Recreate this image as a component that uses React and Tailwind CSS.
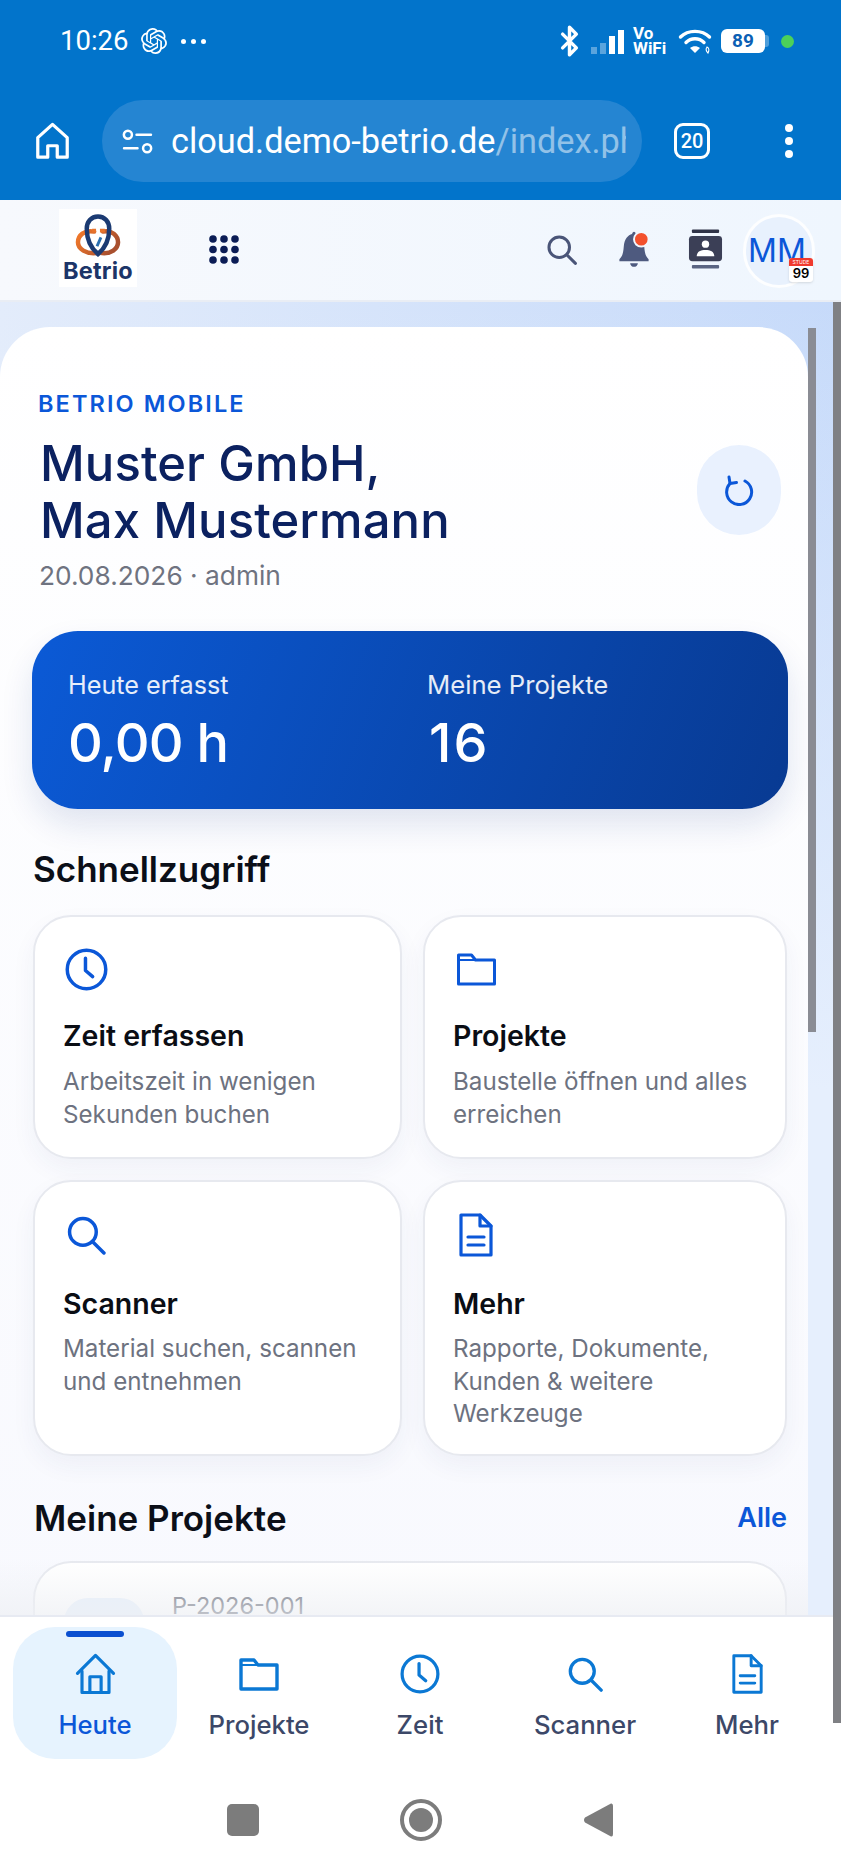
import React from "react";
import { SiOpenai } from "react-icons/si";
import { Bluetooth } from "lucide-react";

const HomeOutline = ({ className, sw = 2 }) => (
  <svg viewBox="0 0 36 40" fill="none" stroke="currentColor" strokeWidth={sw} strokeLinejoin="round" strokeLinecap="round" className={className}>
    <path d="M2 19 L18 3 L34 19" />
    <path d="M6 17 V36 H30 V17" />
    <path d="M13 36 V22 H23 V36" />
  </svg>
);
const BrowserHome = ({ className }) => (
  <svg viewBox="0 0 36 40" fill="none" stroke="currentColor" strokeWidth="3.4" strokeLinejoin="round" className={className}>
    <path d="M2.5 16.5 L18 2.5 L33.5 16.5 V37 H23 V25 H13 V37 H2.5 Z" />
  </svg>
);
const FolderIcon = ({ className, sw = 3 }) => (
  <svg viewBox="0 0 40 34" fill="none" stroke="currentColor" strokeWidth={sw} strokeLinejoin="round" className={className}>
    <path d="M2 3 H15 L19 8 H38 V32 H2 Z" />
    <path d="M2 8 H19" strokeWidth="2" />
  </svg>
);
const ClockIcon = ({ className }) => (
  <svg viewBox="0 0 42 42" fill="none" stroke="currentColor" strokeWidth="3.4" strokeLinecap="round" strokeLinejoin="round" className={className}>
    <circle cx="21" cy="21" r="18.8" />
    <path d="M20 10 V22 L27 28" />
  </svg>
);
const SearchIcon = ({ className, sw = 3.4 }) => (
  <svg viewBox="0 0 38 38" fill="none" stroke="currentColor" strokeWidth={sw} strokeLinecap="round" className={className}>
    <circle cx="15.5" cy="15.5" r="13" />
    <path d="M25 25 L36 36" />
  </svg>
);
const DocIcon = ({ className }) => (
  <svg viewBox="0 0 34 44" fill="none" stroke="currentColor" strokeWidth="3.2" strokeLinejoin="round" strokeLinecap="round" className={className}>
    <path d="M2 2 H21 L32 13 V42 H2 Z" />
    <path d="M21 2 V13 H32" />
    <path d="M9 24 H25 M9 32 H25" />
  </svg>
);
const RefreshIcon = ({ className }) => (
  <svg viewBox="0 0 30 32" fill="none" stroke="currentColor" strokeWidth="3" strokeLinecap="round" strokeLinejoin="round" className={className}>
    <path d="M21 7 A12.5 12.5 0 1 1 6 9.5" />
    <path d="M5 3 L6 9.5 L12.5 8.5" />
  </svg>
);
const TuneIcon = ({ className }) => (
  <svg viewBox="0 0 32 26" fill="none" stroke="currentColor" strokeWidth="2.6" strokeLinecap="round" className={className}>
    <circle cx="6" cy="6" r="4.2" />
    <path d="M15 6 H30 M2 20 H16" />
    <circle cx="26" cy="20" r="4.2" />
  </svg>
);
const WifiIcon = ({ className }) => (
  <svg viewBox="0 0 34 26" fill="none" stroke="currentColor" strokeLinecap="round" className={className}>
    <path d="M2.5 9 C10 1.5 24 1.5 31.5 9" strokeWidth="3.4" />
    <path d="M8 14.5 C13 9.5 21 9.5 26 14.5" strokeWidth="3.4" />
    <path d="M12 20 L17 25 L22 20 C19 17.5 15 17.5 12 20 Z" fill="currentColor" stroke="none" />
    <path d="M29 19 C31 20 31.5 22 30 25 C28 23 27.5 21 29 19 Z" strokeWidth="1.1" />
  </svg>
);
const BellIcon = ({ className }) => (
  <svg viewBox="0 0 32 38" className={className}>
    <path d="M1 29 C4 26 5 23 5.5 16 C6 8 10 4 14 3 C15 0 17 0 18 3 C22 4 26 8 26.5 16 C27 23 28 26 31 29 V31 H1 Z" fill="#4e5a7f" />
    <path d="M12 33 H20 C19.5 38 12.5 38 12 33 Z" fill="#4e5a7f" />
    <circle cx="23.5" cy="8.5" r="7.5" fill="#f3512d" stroke="#f2f7fe" strokeWidth="2" />
  </svg>
);
const ContactIcon = ({ className }) => (
  <svg viewBox="0 0 36 42" className={className}>
    <rect x="4" y="0.5" width="28" height="3.5" rx="1" fill="#2f3347" />
    <rect x="1" y="7" width="34" height="26" rx="3.5" fill="#3b3f56" />
    <circle cx="18" cy="15.5" r="3.8" fill="#fff" />
    <path d="M9 28 C9 23 13 21.5 18 21.5 C23 21.5 27 23 27 28 Z" fill="#fff" />
    <rect x="4" y="37" width="28" height="3.5" rx="1" fill="#5a6482" />
  </svg>
);
const AppsIcon = ({ className }) => (
  <svg viewBox="0 0 30 29" fill="#0b1c55" className={className}>
    {[4, 15, 26].map((x) => [4, 14.5, 25].map((y) => <circle key={x + "-" + y} cx={x} cy={y} r="3.8" />))}
  </svg>
);
const LogoMark = ({ className }) => (
  <svg viewBox="0 0 46 44" fill="none" className={className}>
    <defs>
      <linearGradient id="orangeRing" x1="0" y1="0" x2="1" y2="0.4">
        <stop offset="0" stopColor="#f47a2a" />
        <stop offset="1" stopColor="#a9502f" />
      </linearGradient>
    </defs>
    <path d="M19 18 C9 16 2.5 22 2.5 29 C2.5 36 11 41 21 40 M28 18 C37 16 43.5 22 43.5 29 C43.5 36 36 41 27 40" stroke="url(#orangeRing)" strokeWidth="4.6" strokeLinecap="round" />
    <path d="M23 2.5 C30 2.5 34.5 8 34.5 15 C34.5 26 30 35 23 41 C16 35 11.5 26 11.5 15 C11.5 8 16 2.5 23 2.5 Z" stroke="#1b3a72" strokeWidth="4.6" />
    <path d="M17 17 H21 M25 17 H30" stroke="#e8742c" strokeWidth="4" />
    <path d="M26 24 L22 33" stroke="#2a6fb0" strokeWidth="3" />
  </svg>
);

function ActionCard({ icon, title, lines, tall }) {
  return (
    <div className={`flex flex-col rounded-[38px] border-2 border-[#e7e9ef] bg-white pl-[28px] shadow-[0_10px_24px_rgba(30,50,110,0.05)] ${tall ? "h-[276px] pt-[31px]" : "h-[244px] pt-[30px]"}`}>
      <div className="flex h-[44px] items-center text-[#0b57d8]">{icon}</div>
      <div className={`text-[28.5px] leading-[36px] font-semibold text-[#0a0d14] ${tall ? "mt-[29px]" : "mt-[27px]"}`}>{title}</div>
      <div className={`text-[24.2px] leading-[32.5px] text-[#6d7280] ${tall ? "mt-[11px]" : "mt-[12px]"}`}>
        {lines.map((l) => (
          <div key={l} className="whitespace-nowrap">{l}</div>
        ))}
      </div>
    </div>
  );
}

function NavItem({ icon, label, active }) {
  return (
    <div className={`relative flex h-[132px] flex-col items-center rounded-[42px] pt-[24px] ${active ? "bg-[#e6f3fe]" : ""}`}>
      {active && <div className="absolute top-[4px] h-[6px] w-[58px] rounded-full bg-[#0b4fd0]" />}
      <div className="flex h-[46px] items-center text-[#0b78d4]">{icon}</div>
      <div className={`mt-[11px] text-[25.7px] leading-[34px] font-medium whitespace-nowrap ${active ? "text-[#0b57d8]" : "text-[#3c4868]"}`}>{label}</div>
    </div>
  );
}

export default function App() {
  return (
    <div className="relative flex h-[1870px] w-[841px] flex-col overflow-hidden bg-white font-['Inter',sans-serif]">
      {/* Browser chrome */}
      <div className="h-[200px] shrink-0 bg-[#0274cb] font-['Roboto',sans-serif] text-white">
        <div className="flex h-[82px] items-center justify-between pr-[47px] pl-[60px]">
          <div className="flex items-center">
            <span className="text-[27.5px] leading-none">10:26</span>
            <SiOpenai className="ml-[13px] h-[26px] w-[26px]" />
            <div className="ml-[14px] flex gap-[5px]">
              <span className="h-[5px] w-[5px] rounded-full bg-white" />
              <span className="h-[5px] w-[5px] rounded-full bg-white" />
              <span className="h-[5px] w-[5px] rounded-full bg-white" />
            </div>
          </div>
          <div className="flex items-center">
            <Bluetooth className="h-[36px] w-[33px]" strokeWidth={2.5} />
            <div className="ml-[5px] flex h-[26px] items-end gap-[3px]">
              <span className="h-[7px] w-[6px] bg-white/35" />
              <span className="h-[11px] w-[6px] bg-white/35" />
              <span className="h-[18px] w-[6px] bg-white" />
              <span className="h-[24px] w-[6px] bg-white" />
            </div>
            <div className="ml-[9px] w-[38px] text-[17px] leading-[15px] font-bold">
              <div>Vo</div>
              <div>WiFi</div>
            </div>
            <WifiIcon className="ml-[7px] h-[26px] w-[34px]" />
            <div className="ml-[9px] flex h-[24px] w-[44px] items-center justify-center rounded-[6px] bg-white text-[19px] font-bold text-[#0b5fb4]">89</div>
            <div className="h-[12px] w-[4px] rounded-r-[3px] bg-white/30" />
            <div className="ml-[12px] h-[13px] w-[13px] rounded-full bg-[#4cd05a]" />
          </div>
        </div>
        <div className="mt-[18px] flex h-[82px] items-center">
          <BrowserHome className="ml-[35px] h-[38px] w-[35px]" />
          <div className="ml-[32px] flex h-[82px] w-[540px] items-center overflow-hidden rounded-full bg-[#2585d2] pl-[20px]">
            <TuneIcon className="h-[25px] w-[31px] shrink-0" />
            <span className="ml-[18px] w-[455px] overflow-hidden text-[34.3px] leading-none whitespace-nowrap">
              cloud.demo-betrio.de<span className="text-white/50">/index.php</span>
            </span>
          </div>
          <div className="ml-[32px] flex h-[36px] w-[36px] items-center justify-center rounded-[9px] border-[3px] border-white text-[20px] font-medium">20</div>
          <div className="ml-[75px] flex flex-col gap-[5px]">
            <span className="h-[8px] w-[8px] rounded-full bg-white" />
            <span className="h-[8px] w-[8px] rounded-full bg-white" />
            <span className="h-[8px] w-[8px] rounded-full bg-white" />
          </div>
        </div>
      </div>

      {/* App header */}
      <header className="flex h-[102px] shrink-0 items-center border-b-2 border-[#e9edf4] bg-gradient-to-r from-[#f7f9fd] to-[#eff6fe] pb-[1px]">
        <div className="mb-[3px] ml-[59px] flex h-[78px] w-[78px] flex-col items-center bg-white pt-[5px]">
          <LogoMark className="h-[43px] w-[46px]" />
          <span className="mt-[1px] text-[23.5px] leading-[26px] font-bold tracking-[0.2px] text-[#1c3568]">Betrio</span>
        </div>
        <AppsIcon className="ml-[72px] h-[29px] w-[30px]" />
        <div className="flex-1" />
        <SearchIcon className="h-[30px] w-[30px] text-[#4a5578]" sw={3.8} />
        <BellIcon className="ml-[41px] h-[37px] w-[32px]" />
        <ContactIcon className="ml-[38px] h-[41px] w-[35px]" />
        <div className="relative mt-[2px] mr-[26px] ml-[20px] flex h-[74px] w-[72px] items-center justify-center rounded-full border-[3px] border-white/90 bg-[#e8f1fd] pr-[4px] text-[32px] text-[#0b57d8]">
          MM
          <div className="absolute top-[41px] left-[43px] flex h-[24px] w-[24px] flex-col overflow-hidden rounded-[3px] bg-white text-center shadow-sm">
            <div className="h-[8px] bg-[#f03a2e] text-[5px] leading-[8px] text-white">STUDE</div>
            <div className="text-[13px] leading-[15px] font-semibold text-black">99</div>
          </div>
        </div>
      </header>

      {/* Page */}
      <main className="flex min-h-0 flex-1 overflow-hidden bg-[linear-gradient(to_bottom,transparent,#e6effd_60%),linear-gradient(to_right,#e3ecfb,#c6dafa)] pr-[25px]">
        <div className="mt-[25px] w-[808px] shrink-0 rounded-t-[50px] bg-gradient-to-b from-white to-[#f8f9fe] px-[33px] pt-[60px]">
          <div className="pl-[5px] text-[23.5px] leading-[34px] font-semibold tracking-[2.1px] text-[#0b57d8]">BETRIO MOBILE</div>
          <div className="relative mt-[14px] pl-[7px]">
            <h1 className="text-[49px] leading-[57px] font-medium tracking-[0.1px] text-[#0b2160]">
              Muster GmbH,<br />Max Mustermann
            </h1>
            <div className="absolute top-[10px] right-[-6px] flex h-[90px] w-[84px] items-center justify-center rounded-full bg-[#e9f1fe]">
              <RefreshIcon className="h-[32px] w-[30px] text-[#0b57d8]" />
            </div>
          </div>
          <div className="mt-[10px] pl-[6px] text-[26.3px] leading-[34px] text-[#6f7380]">20.08.2026 · admin</div>

          <div className="mt-[38px] -ml-px grid h-[178px] w-[756px] grid-cols-[359px_1fr] rounded-[46px] bg-[linear-gradient(110deg,#0b5ad6,#083a92)] pt-[37px] pl-[36px] text-white shadow-[0_16px_32px_rgba(20,50,130,0.12)]">
            <div>
              <div className="text-[25.2px] leading-[34px] text-white/90">Heute erfasst</div>
              <div className="mt-[8px] text-[54px] leading-[66px] font-medium tracking-[-0.8px]">0,00 h</div>
            </div>
            <div>
              <div className="text-[25.7px] leading-[34px] text-white/90">Meine Projekte</div>
              <div className="mt-[8px] pl-[2px] text-[54px] leading-[66px] font-medium tracking-[2px]">16</div>
            </div>
          </div>

          <h2 className="mt-[38px] text-[35px] leading-[44px] font-semibold text-[#0b0f18]">Schnellzugriff</h2>
          <div className="mt-[24px] grid w-[754px] grid-cols-[369px_364px] gap-x-[21px] gap-y-[21px]">
            <ActionCard icon={<ClockIcon className="ml-[2px] h-[43px] w-[43px]" />} title="Zeit erfassen" lines={["Arbeitszeit in wenigen", "Sekunden buchen"]} />
            <ActionCard icon={<FolderIcon className="ml-[1px] h-[34px] w-[45px]" />} title="Projekte" lines={["Baustelle öffnen und alles", "erreichen"]} />
            <ActionCard tall icon={<SearchIcon className="ml-[4px] h-[39px] w-[39px]" sw={3.4} />} title="Scanner" lines={["Material suchen, scannen", "und entnehmen"]} />
            <ActionCard tall icon={<DocIcon className="ml-[6px] h-[44px] w-[34px]" />} title="Mehr" lines={["Rapporte, Dokumente,", "Kunden & weitere", "Werkzeuge"]} />
          </div>

          <div className="mt-[41px] flex w-[754px] items-center justify-between pl-[1px]">
            <h2 className="text-[35px] leading-[42px] font-semibold text-[#0b0f18]">Meine Projekte</h2>
            <span className="text-[27px] leading-[36px] font-semibold text-[#0b57d8]">Alle</span>
          </div>
          <div className="mt-[22px] flex h-[120px] w-[754px] rounded-t-[38px] border-2 border-b-0 border-[#e7e9ef] bg-white pt-[35px] pl-[29px]">
            <div className="h-[80px] w-[80px] rounded-[24px] bg-[#e6f0fc]" />
            <div className="mt-[-7px] ml-[28px] text-[23.5px] leading-[30px] text-[#565b69]">P-2026-001</div>
          </div>
        </div>
        <div className="mt-[26px] h-[704px] w-[8px] shrink-0 bg-[#8a8c94]" />
      </main>

      {/* Fade above the bottom bar */}
      <div className="pointer-events-none absolute top-[1560px] left-0 h-[55px] w-[808px] bg-gradient-to-b from-transparent to-[#eef0f4]/70" />

      {/* Bottom nav */}
      <nav className="relative h-[255px] shrink-0 border-t-2 border-[#e7eaf2] bg-white">
        <div className="mt-[10px] ml-[13px] grid grid-cols-[164px_164px_158px_172px_152px]">
          <NavItem active label="Heute" icon={<HomeOutline className="h-[45px] w-[41px]" sw={2.8} />} />
          <NavItem label="Projekte" icon={<FolderIcon className="h-[34px] w-[40px]" sw={3.4} />} />
          <NavItem label="Zeit" icon={<ClockIcon className="h-[40px] w-[40px]" />} />
          <NavItem label="Scanner" icon={<SearchIcon className="h-[35px] w-[35px]" sw={3.6} />} />
          <NavItem label="Mehr" icon={<DocIcon className="h-[42px] w-[31px]" />} />
        </div>
        <div className="mt-[43px] flex h-[36px] items-center">
          <div className="ml-[227px] h-[32px] w-[32px] rounded-[5px] bg-[#7c7c7c]" />
          <div className="ml-[141px] flex h-[42px] w-[42px] items-center justify-center rounded-full border-[4px] border-[#7c7c7c]">
            <div className="h-[24px] w-[24px] rounded-full bg-[#7c7c7c]" />
          </div>
          <svg viewBox="0 0 30 36" className="ml-[141px] h-[36px] w-[30px]" fill="#7c7c7c">
            <path d="M28 1.5 Q30 1 30 4 V32 Q30 35 28 34.5 L2 20.5 Q0 18 2 15.5 Z" />
          </svg>
        </div>
      </nav>

      {/* Outer page scrollbar, over the page and the bar */}
      <div className="absolute top-[302px] right-0 h-[1421px] w-[8px] bg-[#7f8084]" />
    </div>
  );
}
